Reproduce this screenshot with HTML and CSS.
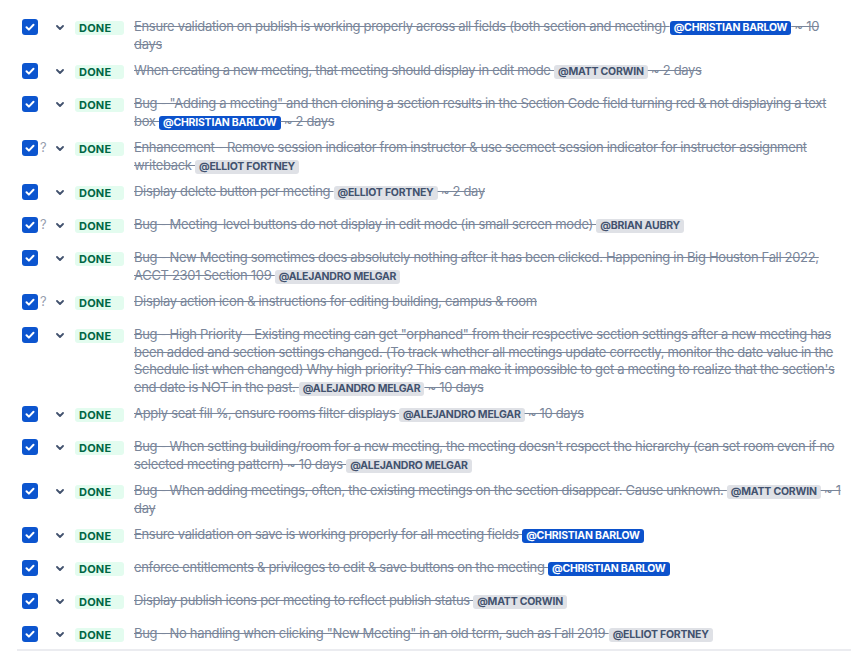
FILE: index.html
```html
<!DOCTYPE html>
<html>
<head>
<meta charset="utf-8">
<link rel="stylesheet" href="styles.css">
</head>
<body>
<div class="tasks">
  <div class="task"><div class="cb-cell"><span class="cb"><svg viewBox="0 0 16 16" width="16" height="16"><path d="M4.5 8.2l2.4 2.4 4.6-4.8" fill="none" stroke="#fff" stroke-width="2" stroke-linecap="round" stroke-linejoin="round"/></svg></span></div><div class="chev-cell"><svg class="chev" viewBox="0 0 8 5" width="8" height="5"><path d="M1 1l3 3 3-3" fill="none" stroke="#42526e" stroke-width="1.8" stroke-linecap="round" stroke-linejoin="round"/></svg></div><div class="loz-cell"><span class="loz">DONE</span></div><div class="txt"><span class="strike">Ensure validation on publish is working properly across all fields (both section and meeting) <span class="mention me">@CHRISTIAN BARLOW</span> ~&nbsp;10 days</span></div></div>

  <div class="task"><div class="cb-cell"><span class="cb"><svg viewBox="0 0 16 16" width="16" height="16"><path d="M4.5 8.2l2.4 2.4 4.6-4.8" fill="none" stroke="#fff" stroke-width="2" stroke-linecap="round" stroke-linejoin="round"/></svg></span></div><div class="chev-cell"><svg class="chev" viewBox="0 0 8 5" width="8" height="5"><path d="M1 1l3 3 3-3" fill="none" stroke="#42526e" stroke-width="1.8" stroke-linecap="round" stroke-linejoin="round"/></svg></div><div class="loz-cell"><span class="loz">DONE</span></div><div class="txt"><span class="strike">When creating a new meeting, that meeting should display in edit mode <span class="mention">@MATT CORWIN</span> ~&nbsp;2 days</span></div></div>

  <div class="task"><div class="cb-cell"><span class="cb"><svg viewBox="0 0 16 16" width="16" height="16"><path d="M4.5 8.2l2.4 2.4 4.6-4.8" fill="none" stroke="#fff" stroke-width="2" stroke-linecap="round" stroke-linejoin="round"/></svg></span></div><div class="chev-cell"><svg class="chev" viewBox="0 0 8 5" width="8" height="5"><path d="M1 1l3 3 3-3" fill="none" stroke="#42526e" stroke-width="1.8" stroke-linecap="round" stroke-linejoin="round"/></svg></div><div class="loz-cell"><span class="loz">DONE</span></div><div class="txt"><span class="strike">Bug - "Adding a meeting" and then cloning a section results in the Section Code field turning red &amp; not displaying a text box <span class="mention me">@CHRISTIAN BARLOW</span> ~&nbsp;2 days</span></div></div>

  <div class="task"><div class="cb-cell"><span class="cb"><svg viewBox="0 0 16 16" width="16" height="16"><path d="M4.5 8.2l2.4 2.4 4.6-4.8" fill="none" stroke="#fff" stroke-width="2" stroke-linecap="round" stroke-linejoin="round"/></svg></span><span class="q">?</span></div><div class="chev-cell"><svg class="chev" viewBox="0 0 8 5" width="8" height="5"><path d="M1 1l3 3 3-3" fill="none" stroke="#42526e" stroke-width="1.8" stroke-linecap="round" stroke-linejoin="round"/></svg></div><div class="loz-cell"><span class="loz">DONE</span></div><div class="txt"><span class="strike">Enhancement - Remove session indicator from instructor &amp; use secmeet session indicator for instructor assignment writeback <span class="mention">@ELLIOT FORTNEY</span></span></div></div>

  <div class="task"><div class="cb-cell"><span class="cb"><svg viewBox="0 0 16 16" width="16" height="16"><path d="M4.5 8.2l2.4 2.4 4.6-4.8" fill="none" stroke="#fff" stroke-width="2" stroke-linecap="round" stroke-linejoin="round"/></svg></span></div><div class="chev-cell"><svg class="chev" viewBox="0 0 8 5" width="8" height="5"><path d="M1 1l3 3 3-3" fill="none" stroke="#42526e" stroke-width="1.8" stroke-linecap="round" stroke-linejoin="round"/></svg></div><div class="loz-cell"><span class="loz">DONE</span></div><div class="txt"><span class="strike">Display delete button per meeting <span class="mention">@ELLIOT FORTNEY</span> ~&nbsp;2 day</span></div></div>

  <div class="task"><div class="cb-cell"><span class="cb"><svg viewBox="0 0 16 16" width="16" height="16"><path d="M4.5 8.2l2.4 2.4 4.6-4.8" fill="none" stroke="#fff" stroke-width="2" stroke-linecap="round" stroke-linejoin="round"/></svg></span><span class="q">?</span></div><div class="chev-cell"><svg class="chev" viewBox="0 0 8 5" width="8" height="5"><path d="M1 1l3 3 3-3" fill="none" stroke="#42526e" stroke-width="1.8" stroke-linecap="round" stroke-linejoin="round"/></svg></div><div class="loz-cell"><span class="loz">DONE</span></div><div class="txt"><span class="strike">Bug - Meeting-level buttons do not display in edit mode (in small screen mode) <span class="mention">@BRIAN AUBRY</span></span></div></div>

  <div class="task"><div class="cb-cell"><span class="cb"><svg viewBox="0 0 16 16" width="16" height="16"><path d="M4.5 8.2l2.4 2.4 4.6-4.8" fill="none" stroke="#fff" stroke-width="2" stroke-linecap="round" stroke-linejoin="round"/></svg></span></div><div class="chev-cell"><svg class="chev" viewBox="0 0 8 5" width="8" height="5"><path d="M1 1l3 3 3-3" fill="none" stroke="#42526e" stroke-width="1.8" stroke-linecap="round" stroke-linejoin="round"/></svg></div><div class="loz-cell"><span class="loz">DONE</span></div><div class="txt"><span class="strike">Bug - New Meeting sometimes does absolutely nothing after it has been clicked. Happening in Big Houston Fall 2022, ACCT 2301 Section 109 <span class="mention">@ALEJANDRO MELGAR</span></span></div></div>

  <div class="task"><div class="cb-cell"><span class="cb"><svg viewBox="0 0 16 16" width="16" height="16"><path d="M4.5 8.2l2.4 2.4 4.6-4.8" fill="none" stroke="#fff" stroke-width="2" stroke-linecap="round" stroke-linejoin="round"/></svg></span><span class="q">?</span></div><div class="chev-cell"><svg class="chev" viewBox="0 0 8 5" width="8" height="5"><path d="M1 1l3 3 3-3" fill="none" stroke="#42526e" stroke-width="1.8" stroke-linecap="round" stroke-linejoin="round"/></svg></div><div class="loz-cell"><span class="loz">DONE</span></div><div class="txt"><span class="strike">Display action icon &amp; instructions for editing building, campus &amp; room</span></div></div>

  <div class="task"><div class="cb-cell"><span class="cb"><svg viewBox="0 0 16 16" width="16" height="16"><path d="M4.5 8.2l2.4 2.4 4.6-4.8" fill="none" stroke="#fff" stroke-width="2" stroke-linecap="round" stroke-linejoin="round"/></svg></span></div><div class="chev-cell"><svg class="chev" viewBox="0 0 8 5" width="8" height="5"><path d="M1 1l3 3 3-3" fill="none" stroke="#42526e" stroke-width="1.8" stroke-linecap="round" stroke-linejoin="round"/></svg></div><div class="loz-cell"><span class="loz">DONE</span></div><div class="txt"><span class="strike">Bug - High Priority - Existing meeting can get "orphaned" from their respective section settings after a new meeting has been added and section settings changed. (To track whether all meetings update correctly, monitor the date value in the Schedule list when changed) Why high priority? This can make it impossible to get a meeting to realize that the section's end date is NOT in the past. <span class="mention">@ALEJANDRO MELGAR</span> ~&nbsp;10 days</span></div></div>

  <div class="task"><div class="cb-cell"><span class="cb"><svg viewBox="0 0 16 16" width="16" height="16"><path d="M4.5 8.2l2.4 2.4 4.6-4.8" fill="none" stroke="#fff" stroke-width="2" stroke-linecap="round" stroke-linejoin="round"/></svg></span></div><div class="chev-cell"><svg class="chev" viewBox="0 0 8 5" width="8" height="5"><path d="M1 1l3 3 3-3" fill="none" stroke="#42526e" stroke-width="1.8" stroke-linecap="round" stroke-linejoin="round"/></svg></div><div class="loz-cell"><span class="loz">DONE</span></div><div class="txt"><span class="strike">Apply seat fill %, ensure rooms filter displays <span class="mention">@ALEJANDRO MELGAR</span> ~&nbsp;10 days</span></div></div>

  <div class="task"><div class="cb-cell"><span class="cb"><svg viewBox="0 0 16 16" width="16" height="16"><path d="M4.5 8.2l2.4 2.4 4.6-4.8" fill="none" stroke="#fff" stroke-width="2" stroke-linecap="round" stroke-linejoin="round"/></svg></span></div><div class="chev-cell"><svg class="chev" viewBox="0 0 8 5" width="8" height="5"><path d="M1 1l3 3 3-3" fill="none" stroke="#42526e" stroke-width="1.8" stroke-linecap="round" stroke-linejoin="round"/></svg></div><div class="loz-cell"><span class="loz">DONE</span></div><div class="txt"><span class="strike">Bug - When setting building/room for a new meeting, the meeting doesn't respect the hierarchy (can set room even if no selected meeting pattern) ~&nbsp;10 days <span class="mention">@ALEJANDRO MELGAR</span></span></div></div>

  <div class="task"><div class="cb-cell"><span class="cb"><svg viewBox="0 0 16 16" width="16" height="16"><path d="M4.5 8.2l2.4 2.4 4.6-4.8" fill="none" stroke="#fff" stroke-width="2" stroke-linecap="round" stroke-linejoin="round"/></svg></span></div><div class="chev-cell"><svg class="chev" viewBox="0 0 8 5" width="8" height="5"><path d="M1 1l3 3 3-3" fill="none" stroke="#42526e" stroke-width="1.8" stroke-linecap="round" stroke-linejoin="round"/></svg></div><div class="loz-cell"><span class="loz">DONE</span></div><div class="txt"><span class="strike">Bug - When adding meetings, often, the existing meetings on the section disappear. Cause unknown. <span class="mention">@MATT CORWIN</span> ~&nbsp;1 day</span></div></div>

  <div class="task"><div class="cb-cell"><span class="cb"><svg viewBox="0 0 16 16" width="16" height="16"><path d="M4.5 8.2l2.4 2.4 4.6-4.8" fill="none" stroke="#fff" stroke-width="2" stroke-linecap="round" stroke-linejoin="round"/></svg></span></div><div class="chev-cell"><svg class="chev" viewBox="0 0 8 5" width="8" height="5"><path d="M1 1l3 3 3-3" fill="none" stroke="#42526e" stroke-width="1.8" stroke-linecap="round" stroke-linejoin="round"/></svg></div><div class="loz-cell"><span class="loz">DONE</span></div><div class="txt"><span class="strike">Ensure validation on save is working properly for all meeting fields <span class="mention me">@CHRISTIAN BARLOW</span></span></div></div>

  <div class="task"><div class="cb-cell"><span class="cb"><svg viewBox="0 0 16 16" width="16" height="16"><path d="M4.5 8.2l2.4 2.4 4.6-4.8" fill="none" stroke="#fff" stroke-width="2" stroke-linecap="round" stroke-linejoin="round"/></svg></span></div><div class="chev-cell"><svg class="chev" viewBox="0 0 8 5" width="8" height="5"><path d="M1 1l3 3 3-3" fill="none" stroke="#42526e" stroke-width="1.8" stroke-linecap="round" stroke-linejoin="round"/></svg></div><div class="loz-cell"><span class="loz">DONE</span></div><div class="txt"><span class="strike">enforce entitlements &amp; privileges to edit &amp; save buttons on the meeting <span class="mention me">@CHRISTIAN BARLOW</span></span></div></div>

  <div class="task"><div class="cb-cell"><span class="cb"><svg viewBox="0 0 16 16" width="16" height="16"><path d="M4.5 8.2l2.4 2.4 4.6-4.8" fill="none" stroke="#fff" stroke-width="2" stroke-linecap="round" stroke-linejoin="round"/></svg></span></div><div class="chev-cell"><svg class="chev" viewBox="0 0 8 5" width="8" height="5"><path d="M1 1l3 3 3-3" fill="none" stroke="#42526e" stroke-width="1.8" stroke-linecap="round" stroke-linejoin="round"/></svg></div><div class="loz-cell"><span class="loz">DONE</span></div><div class="txt"><span class="strike">Display publish icons per meeting to reflect publish status <span class="mention">@MATT CORWIN</span></span></div></div>

  <div class="task"><div class="cb-cell"><span class="cb"><svg viewBox="0 0 16 16" width="16" height="16"><path d="M4.5 8.2l2.4 2.4 4.6-4.8" fill="none" stroke="#fff" stroke-width="2" stroke-linecap="round" stroke-linejoin="round"/></svg></span></div><div class="chev-cell"><svg class="chev" viewBox="0 0 8 5" width="8" height="5"><path d="M1 1l3 3 3-3" fill="none" stroke="#42526e" stroke-width="1.8" stroke-linecap="round" stroke-linejoin="round"/></svg></div><div class="loz-cell"><span class="loz">DONE</span></div><div class="txt"><span class="strike">Bug - No handling when clicking "New Meeting" in an old term, such as Fall 2019 <span class="mention">@ELLIOT FORTNEY</span></span></div></div>
</div>
</body>
</html>
```
FILE: styles.css
```css
html, body {
  margin: 0;
  padding: 0;
  background: #ffffff;
}
body {
  font-family: Inter, "Noto Sans", sans-serif;
  font-size: 13px;
  color: #7a869a;
}
.tasks {
  margin: 9px 0 0 17px;
  padding-left: 5px;
  border-bottom: 2px solid #ebecf0;
}
.task {
  display: flex;
  align-items: flex-start;
  padding-top: 9px;
  min-height: 24px;
}
.cb-cell {
  width: 34px;
  height: 17.5px;
  display: flex;
  align-items: center;
  flex: none;
}
.cb {
  width: 16px;
  height: 16px;
  border-radius: 3px;
  background: #0c55cf;
  display: block;
}
.cb svg { display: block; }
.q {
  margin-left: 2px;
  color: #97a0af;
  font-size: 13px;
  line-height: 17.5px;
}
.chev-cell {
  width: 19px;
  height: 17.5px;
  display: flex;
  align-items: center;
  flex: none;
}
.chev { display: block; margin-top: 2px; }
.loz-cell {
  width: 59px;
  flex: none;
  height: 17.5px;
  padding-top: 2.5px;
  box-sizing: border-box;
}
.loz {
  display: block;
  width: 49px;
  height: 14px;
  box-sizing: border-box;
  padding-left: 4px;
  border-radius: 3px;
  background: #e3fcef;
  color: #006644;
  font-size: 11px;
  font-weight: 700;
  line-height: 14px;
  letter-spacing: 0.2px;
}
.txt {
  flex: 1;
  line-height: 17.5px;
  padding-right: 6px;
  letter-spacing: -0.32px;
}
.strike {
  text-decoration: line-through;
}
.mention {
  display: inline-block;
  line-height: 14px;
  padding: 0 4px;
  border-radius: 3px;
  background: #dfe1e6;
  color: #42526e;
  font-size: 10.5px;
  font-weight: 700;
  letter-spacing: -0.22px;
  vertical-align: 0;
}
.mention.me {
  background: #0c52cc;
  color: #ffffff;
}
```
